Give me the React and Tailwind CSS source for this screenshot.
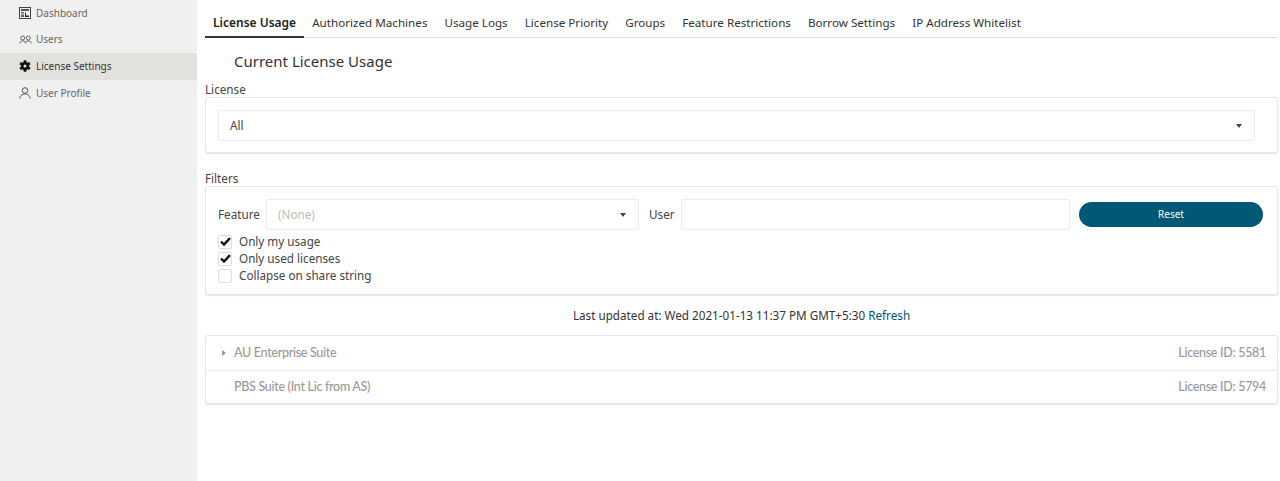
import React from "react";

const tabs = ["Authorized Machines","Usage Logs","License Priority","Groups","Feature Restrictions","Borrow Settings","IP Address Whitelist"];

function DashIcon(){return(<svg width="12" height="12" viewBox="0 0 12 12" fill="none"><rect x="0.5" y="0.5" width="11" height="11" stroke="#444"/><rect x="2" y="2" width="8" height="2" fill="#555"/><rect x="2" y="5" width="3" height="1.5" fill="#666"/><rect x="2" y="7.5" width="3" height="2.5" fill="#666"/><path d="M6 5.5 L7 5.5 L7 8.5 L10 8.5 L10 10 L6 10Z" fill="#222"/></svg>);}
function UsersIcon(){return(<svg width="13" height="9" viewBox="0 0 13 9" fill="none" stroke="#555" strokeWidth="0.9"><circle cx="3.7" cy="3" r="2"/><circle cx="9.3" cy="3" r="2"/><path d="M0.7 8.3c0-1.5 1.2-2.4 3-2.4s3 .9 3 2.4"/><path d="M6.3 8.3c0-1.5 1.2-2.4 3-2.4s3 .9 3 2.4"/></svg>);}
function GearIcon(){return(<svg width="12" height="12" viewBox="0 0 12 12"><g fill="#111"><circle cx="6" cy="6" r="4.2"/><rect x="4.6" y="0.3" width="2.8" height="11.4" rx="0.5"/><rect x="4.6" y="0.3" width="2.8" height="11.4" rx="0.5" transform="rotate(60 6 6)"/><rect x="4.6" y="0.3" width="2.8" height="11.4" rx="0.5" transform="rotate(120 6 6)"/></g><circle cx="6" cy="6" r="1.5" fill="#e3e1de"/></svg>);}
function UserIcon(){return(<svg width="12" height="12" viewBox="0 0 12 12" fill="none" stroke="#555" strokeWidth="1"><circle cx="6" cy="3.5" r="2.8"/><path d="M0.8 11.5c.4-2.8 2.3-4.6 5.2-4.6s4.8 1.8 5.2 4.6"/></svg>);}

function Nav({icon,label,active}){
  return <div className={`flex items-center h-[26.6px] pl-[19px] rounded-r-[2px] ${active?"bg-[#e3e1de] text-[#333]":"text-[#666]"}`}>
    <span className="w-[17px] flex items-center">{icon}</span>
    <span className="text-[10px]">{label}</span>
  </div>;
}
function Caret(){return <span className="w-0 h-0 border-x-[3.5px] border-x-transparent border-t-[4px] border-t-[#444]"/>;}
function Check({on,label}){
  return <label className="flex items-center h-[17.25px]">
    <span className="w-[14px] h-[14px] border border-[#ddd] rounded-[2px] flex items-center justify-center bg-white mr-[7px]">
      {on && <svg width="11" height="9" viewBox="0 0 11 9"><path d="M1 4.5 L4 7.5 L10 1.2" fill="none" stroke="#111" strokeWidth="2.4"/></svg>}
    </span>
    <span className="text-[11.7px] text-[#444]">{label}</span>
  </label>;
}
const card="border border-[#e6e6e6] rounded-[3px] shadow-[0_1px_1px_rgba(0,0,0,0.1)] bg-white";
export default function App(){
  return <div className="flex w-[1280px] h-[481px] bg-white overflow-hidden font-['Noto_Sans',sans-serif]">
    <aside className="w-[197px] shrink-0 bg-[#f0f0f0]">
      <Nav icon={<DashIcon/>} label="Dashboard"/>
      <Nav icon={<UsersIcon/>} label="Users"/>
      <Nav icon={<GearIcon/>} label="License Settings" active/>
      <Nav icon={<UserIcon/>} label="User Profile"/>
    </aside>
    <main className="flex-1 pl-[8px] pr-[2px]">
      <div className="flex h-[38px] border-b border-[#ddd] text-[11.65px] text-[#333] gap-[17px] pt-[14px]">
        <div className="pl-[8px] pr-[8px] h-[24px] border-b-2 border-[#333] text-[12px] font-semibold text-[#222] -mr-[9px]">License Usage</div>
        {tabs.map(t=><div key={t} className="whitespace-nowrap">{t}</div>)}
      </div>
      <h2 className="text-[15px] text-[#333] pl-[29px] pt-[13px] leading-[20px] h-[41px]">Current License Usage</h2>
      <div className="text-[11.7px] text-[#444] leading-[20px] h-[18px]">License</div>
      <div className={`${card} h-[56px] pl-[12px] pr-[22px] pt-[12px]`}>
        <div className="h-[31px] border border-[#ececec] rounded-[2px] flex items-center justify-between pl-[11px] pr-[12px] text-[11.7px] text-[#444]">
          <span>All</span><Caret/>
        </div>
      </div>
      <div className="text-[11.7px] text-[#444] leading-[20px] h-[18px] mt-[15px]">Filters</div>
      <div className={`${card} h-[109px] px-[12px] pt-[12px]`}>
        <div className="flex items-center h-[31px] text-[11.7px] text-[#444]">
          <span className="w-[48px]">Feature</span>
          <div className="w-[373px] h-[31px] border border-[#ececec] rounded-[2px] flex items-center justify-between pl-[11px] pr-[12px]">
            <span className="text-[#bbb]">(None)</span><Caret/>
          </div>
          <span className="ml-[10px] w-[32px]">User</span>
          <div className="w-[389px] h-[31px] border border-[#ececec] rounded-[2px]"/>
          <button className="ml-[9px] w-[184px] h-[25px] rounded-full bg-[#005776] text-white text-[10px]">Reset</button>
        </div>
        <div className="mt-[3px]">
          <Check on label="Only my usage"/>
          <Check on label="Only used licenses"/>
          <Check label="Collapse on share string"/>
        </div>
      </div>
      <div className="text-center text-[11.7px] text-[#333] mt-[12px] leading-[17px] h-[28px]">Last updated at: Wed 2021-01-13 11:37 PM GMT+5:30 <span className="text-[#005776]">Refresh</span></div>
      <div className={`${card} border-[#ddd] font-['Lato',sans-serif] text-[12.5px] tracking-[-0.3px] text-[#999]`}>
        <div className="h-[35px] flex items-center border-b border-[#eaeaea] pr-[11px]">
          <span className="w-[28px] pl-[16px] flex"><span className="w-0 h-0 border-y-[3.5px] border-y-transparent border-l-[4px] border-l-[#999]"/></span>
          <span className="font-medium">AU Enterprise Suite</span>
          <span className="ml-auto font-medium">License ID: 5581</span>
        </div>
        <div className="h-[32px] flex items-center pr-[11px] pl-[28px]">
          <span className="font-medium">PBS Suite (Int Lic from AS)</span>
          <span className="ml-auto font-medium">License ID: 5794</span>
        </div>
      </div>
    </main>
  </div>;
}
